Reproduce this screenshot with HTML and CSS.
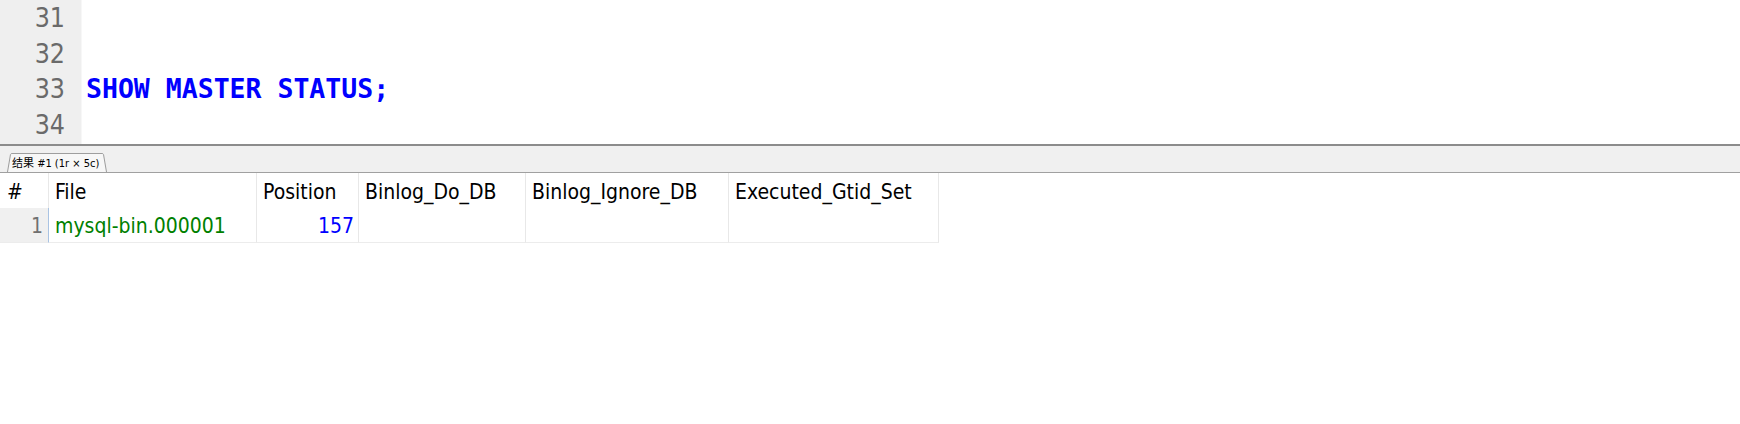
FILE: index.html
```html
<!DOCTYPE html>
<html>
<head>
<meta charset="utf-8">
<link rel="stylesheet" href="styles.css">
</head>
<body>
<div class="editor">
  <div class="gutter">
    <div class="ln">31</div>
    <div class="ln">32</div>
    <div class="ln">33</div>
    <div class="ln">34</div>
  </div>
  <div class="code">
    <div class="line"></div>
    <div class="line"></div>
    <div class="line kw">SHOW MASTER STATUS;</div>
    <div class="line"></div>
  </div>
</div>
<div class="tabbar">
  <div class="tab">
    <svg class="tab-shape" viewBox="0 0 100 20" preserveAspectRatio="none"><path d="M0.5 20 L3.5 1.5 Q4 0.5 5 0.5 L95 0.5 Q96 0.5 96.5 1.5 L99.5 20" fill="#f7f7f7" stroke="#9c9c9c" stroke-width="1" vector-effect="non-scaling-stroke"/></svg>
    <span class="tab-label">结果 #1 (1r × 5c)</span>
  </div>
</div>
<div class="grid">
  <div class="cell head rn-head">#</div>
  <div class="cell head">File</div>
  <div class="cell head">Position</div>
  <div class="cell head">Binlog_Do_DB</div>
  <div class="cell head">Binlog_Ignore_DB</div>
  <div class="cell head">Executed_Gtid_Set</div>
  <div class="cell data rn">1</div>
  <div class="cell data str">mysql-bin.000001</div>
  <div class="cell data num">157</div>
  <div class="cell data"></div>
  <div class="cell data"></div>
  <div class="cell data"></div>
</div>
</body>
</html>
```
FILE: styles.css
```css
html, body {
  margin: 0;
  padding: 0;
  background: #ffffff;
}

.editor {
  display: flex;
  height: 144px;
  overflow: hidden;
  background: #ffffff;
}

.gutter {
  width: 82px;
  flex: none;
  background: #efefef;
  border-right: 1px solid #f7f7f7;
  box-sizing: border-box;
  padding-right: 16px;
  text-align: right;
  font-family: "DejaVu Sans Condensed", "DejaVu Sans", sans-serif;
  font-stretch: condensed;
  font-size: 26.5px;
  line-height: 35.6px;
  color: #6a6a6a;
}

.code {
  flex: 1;
  padding-left: 4px;
  font-family: "DejaVu Sans Mono", "Liberation Mono", monospace;
  font-size: 26.5px;
  line-height: 35.6px;
}

.line {
  height: 35.6px;
  white-space: pre;
}

.kw {
  color: #0000ff;
  font-weight: bold;
}

.tabbar {
  display: flex;
  align-items: flex-end;
  height: 26px;
  background: #f0f0f0;
  border-top: 2px solid #8c8c8c;
  border-bottom: 1px solid #a0a0a0;
}

.tab {
  position: relative;
  margin-left: 7px;
  width: 100px;
  height: 19px;
  display: flex;
  align-items: center;
  padding-left: 5px;
  box-sizing: border-box;
}

.tab-shape {
  position: absolute;
  left: 0;
  top: 0;
  width: 100px;
  height: 19px;
}

.tab-label {
  position: relative;
  font-family: "DejaVu Sans Condensed", "DejaVu Sans", "Noto Sans CJK SC", sans-serif;
  font-stretch: condensed;
  font-size: 11px;
  line-height: 14px;
  color: #000000;
  white-space: nowrap;
  margin-top: 2px;
}

.grid {
  display: grid;
  grid-template-columns: 49px 208px 102px 167px 203px 210px;
  width: 939px;
  font-family: "DejaVu Sans Condensed", "DejaVu Sans", sans-serif;
  font-stretch: condensed;
  font-size: 21px;
}

.cell {
  box-sizing: border-box;
  border-right: 1px solid #e8e8e8;
  padding: 0 6px;
  white-space: nowrap;
  overflow: hidden;
}

.head {
  height: 35px;
  line-height: 35px;
  padding-top: 2px;
  color: #000000;
}

.rn-head {
  padding-left: 7px;
}

.data {
  height: 35px;
  line-height: 33px;
  padding-top: 2px;
  border-bottom: 1px solid #ececec;
}

.rn {
  background: #f0f0f0;
  border-right: 1px solid #a9c3e3;
  text-align: right;
  padding-right: 5px;
  color: #707070;
}

.str {
  color: #008000;
}

.num {
  color: #0000ff;
  text-align: right;
  padding-right: 4px;
}
```
